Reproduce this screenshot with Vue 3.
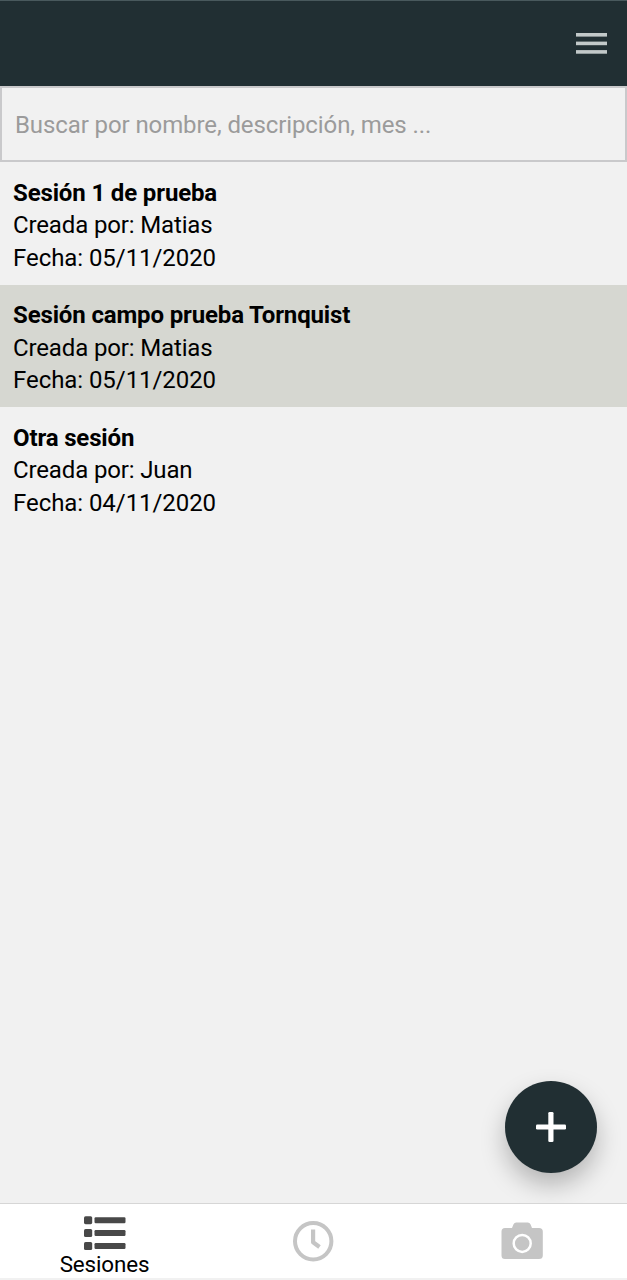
<script setup>
const sessions = [
  { title: 'Sesión 1 de prueba', author: 'Matias', date: '05/11/2020' },
  { title: 'Sesión campo prueba Tornquist', author: 'Matias', date: '05/11/2020' },
  { title: 'Otra sesión', author: 'Juan', date: '04/11/2020' },
]
</script>

<template>
  <div class="screen">
    <header class="topbar">
      <button class="menu" aria-label="Menú">
        <svg width="32" height="22" viewBox="0 0 32 22" fill="#c2c9c9">
          <rect x="1" y="0" width="31" height="3.6" />
          <rect x="1" y="8.6" width="31" height="3.6" />
          <rect x="1" y="17.1" width="31" height="3.6" />
        </svg>
      </button>
    </header>
    <input class="search" type="text" placeholder="Buscar por nombre, descripción, mes ..." />
    <main class="list">
      <article v-for="s in sessions" :key="s.title" class="session">
        <h2>{{ s.title }}</h2>
        <p>Creada por: {{ s.author }}</p>
        <p class="date">Fecha: {{ s.date }}</p>
      </article>
    </main>
    <button class="fab" aria-label="Agregar">
      <svg width="30" height="30" viewBox="0 0 30 30" fill="#fff">
        <rect x="12.3" y="0" width="5.2" height="30" rx="1.3" />
        <rect x="0" y="12.4" width="30" height="5.2" rx="1.3" />
      </svg>
    </button>
    <nav class="tabs">
      <a class="tab active">
        <svg width="42" height="34" viewBox="0 0 42 34" fill="#484848">
          <rect x="0" y="0.2" width="8.2" height="8" rx="1.6" />
          <rect x="0" y="13" width="8.2" height="8" rx="1.6" />
          <rect x="0" y="26" width="8.2" height="8" rx="1.6" />
          <rect x="10.5" y="1.2" width="31" height="6" rx="1.2" />
          <rect x="10.5" y="14" width="31" height="6" rx="1.2" />
          <rect x="10.5" y="27" width="31" height="6" rx="1.2" />
        </svg>
        <span>Sesiones</span>
      </a>
      <a class="tab" aria-label="Historial">
        <svg width="42" height="42" viewBox="0 0 42 42" fill="none" stroke="#c5c5c5">
          <circle cx="21.2" cy="21.2" r="18.2" stroke-width="4" />
          <path d="M21.1 9.5V22.3L27.5 27" stroke-width="4.2" stroke-linejoin="round" />
        </svg>
      </a>
      <a class="tab" aria-label="Cámara">
        <svg width="42" height="38" viewBox="0 0 42 38">
          <path fill="#c5c5c5" d="M4 6H11L12.4 2.4Q13.3.5 15.3.5H26.7Q28.7.5 29.6 2.4L31 6H38Q41.8 6 41.8 9.5V33.5Q41.8 37 38 37H4Q.5 37 .5 33.5V9.5Q.5 6 4 6Z" />
          <circle cx="21.2" cy="21.4" r="8.5" fill="none" stroke="#fff" stroke-width="2.5" />
        </svg>
      </a>
    </nav>
  </div>
</template>

<style>
body {
  margin: 0;
}
</style>

<style scoped>
.screen {
  position: relative;
  display: flex;
  flex-direction: column;
  height: 1280px;
  box-sizing: border-box;
  overflow: hidden;
  background: #f1f1f1;
  color: #000;
  font-family: Roboto, sans-serif;
  font-size: 24px;
  letter-spacing: -0.14px;
}
button {
  padding: 0;
  border: 0;
  background: none;
}
svg {
  display: block;
}
.topbar {
  flex: none;
  display: flex;
  align-items: center;
  justify-content: flex-end;
  height: 86px;
  box-sizing: border-box;
  padding-right: 20px;
  border-top: 1px solid #49595d;
  background: #212f33;
}
.search {
  flex: none;
  width: 100%;
  height: 76px;
  box-sizing: border-box;
  margin: 0;
  padding: 2px 13px 0;
  border: 2px solid #c9c9cb;
  border-radius: 0;
  outline: 0;
  background: #f1f1f1;
  font: inherit;
  letter-spacing: -0.1px;
}
.search::placeholder {
  color: #9b9b9b;
  opacity: 1;
}
.list {
  flex: 1;
}
.session {
  padding: 14.5px 13px 10.5px;
}
.session:nth-child(even) {
  background: #d6d7d1;
}
.session h2,
.session p {
  margin: 0;
  font-size: inherit;
  line-height: 32.5px;
}
.session .date {
  letter-spacing: -0.06px;
}
.fab {
  position: absolute;
  right: 30px;
  bottom: 107px;
  display: flex;
  align-items: center;
  justify-content: center;
  width: 92px;
  height: 92px;
  border-radius: 50%;
  background: #212f33;
  box-shadow: 0 12px 24px rgba(0, 0, 0, 0.25);
}
.tabs {
  position: relative;
  flex: none;
  display: grid;
  grid-template-columns: 209px 208px 210px;
  height: 77px;
  box-sizing: border-box;
  border-top: 1px solid #d6d6d6;
  border-bottom: 2px solid #f1f1f1;
  background: #fff;
}
.tab {
  display: flex;
  flex-direction: column;
  align-items: center;
  justify-content: center;
}
.active {
  justify-content: flex-start;
  padding-top: 12px;
  font-size: 22.4px;
  line-height: 28px;
}
</style>
